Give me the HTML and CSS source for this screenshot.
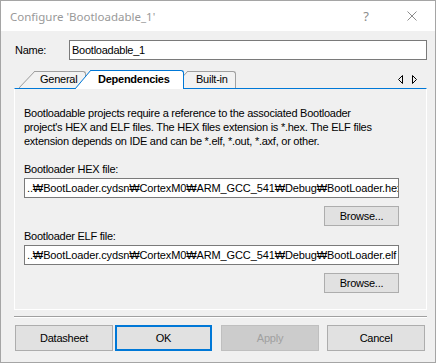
FILE: index.html
```html
<!DOCTYPE html>
<html lang="en">
<head>
    <meta charset="UTF-8">
    <meta name="viewport" content="width=device-width, initial-scale=1.0">
    <title>Configure 'Bootloadable_1'</title>
    <link rel="stylesheet" href="styles.css">
</head>
<body>
    <div class="window">
        <div class="titlebar">
            <span class="title">Configure 'Bootloadable_1'</span>
            <span class="caption-btn help">?</span>
            <span class="caption-btn">
                <svg width="10" height="10" viewBox="0 0 10 10"><path d="M0.5 0.5L9.5 9.5M9.5 0.5L0.5 9.5" stroke="#8c8c8c" stroke-width="1" fill="none"/></svg>
            </span>
        </div>
        <div class="content">
            <div class="name-row">
                <label class="name-label">Name:</label>
                <div class="field">Bootloadable_1</div>
            </div>
            <div class="tabstrip">
                <div class="tab first">General</div>
                <div class="tab active">Dependencies</div>
                <div class="tab last">Built-in</div>
                <div class="tab-scroll">
                    <svg width="20" height="9" viewBox="0 0 20 9">
                        <path d="M4.5 0.5L0.5 4.5L4.5 8.5Z" stroke="#000" fill="none"/>
                        <path d="M14.5 0.5L18.5 4.5L14.5 8.5Z" stroke="#000" fill="none"/>
                    </svg>
                </div>
            </div>
            <div class="panel">
                <p class="info">Bootloadable projects require a reference to the associated Bootloader<br>project's HEX and ELF files. The HEX files extension is *.hex. The ELF files<br>extension depends on IDE and can be *.elf, *.out, *.axf, or other.</p>
                <div class="file-label">Bootloader HEX file:</div>
                <div class="field path">..₩BootLoader.cydsn₩CortexM0₩ARM_GCC_541₩Debug₩BootLoader.hex</div>
                <div class="browse-row"><button class="btn browse">Browse...</button></div>
                <div class="file-label">Bootloader ELF file:</div>
                <div class="field path">..₩BootLoader.cydsn₩CortexM0₩ARM_GCC_541₩Debug₩BootLoader.elf</div>
                <div class="browse-row"><button class="btn browse">Browse...</button></div>
            </div>
            <div class="separator"></div>
            <div class="button-row">
                <button class="btn datasheet">Datasheet</button>
                <button class="btn ok">OK</button>
                <button class="btn apply" disabled>Apply</button>
                <button class="btn cancel">Cancel</button>
            </div>
        </div>
    </div>
</body>
</html>
```

FILE: styles.css
```css
body {
    margin: 0;
    font-family: "Liberation Sans", Arial, sans-serif;
    font-size: 11px;
    letter-spacing: -0.25px;
    color: #000;
    background: #fff;
}
.window {
    width: 436px;
    height: 363px;
    box-sizing: border-box;
    border: 1px solid #a5a5a5;
    background-color: #f0f0f0;
    display: flex;
    flex-direction: column;
}
.titlebar {
    height: 30px;
    background-color: #fff;
    display: flex;
    align-items: center;
    padding-left: 9px;
}
.title {
    flex: 1;
    font-family: "Noto Sans", "DejaVu Sans", sans-serif;
    font-size: 11.5px;
    letter-spacing: 0;
    color: #999;
}
.caption-btn {
    width: 46px;
    height: 30px;
    display: flex;
    align-items: center;
    justify-content: center;
    color: #8c8c8c;
}
.help {
    font-family: "Noto Sans", sans-serif;
    font-size: 13px;
}
.content {
    flex: 1;
    padding: 9px 8px 0 13px;
    display: flex;
    flex-direction: column;
}
.name-row {
    display: flex;
    align-items: center;
    height: 20px;
}
.name-label {
    width: 55px;
    padding-left: 1px;
    box-sizing: border-box;
}
.field {
    flex: 1;
    height: 20px;
    box-sizing: border-box;
    border: 1px solid #7a7a7a;
    background-color: #fff;
    padding: 0 2px;
    line-height: 18px;
    white-space: nowrap;
    overflow: hidden;
}

/* tabs */
.tabstrip {
    margin-top: 10px;
    height: 18px;
    display: flex;
    align-items: flex-end;
}
.tab {
    position: relative;
    height: 17px;
    box-sizing: border-box;
    line-height: 15px;
    border-top: 1px solid #a0a0a0;
    border-right: 1px solid #a0a0a0;
    border-top-right-radius: 3px;
    background-color: #f2f2f2;
    padding-left: 5px;
}
.tab::before {
    content: '';
    position: absolute;
    left: -16px;
    top: -1px;
    bottom: 0;
    width: 16px;
    background: linear-gradient(to bottom right, transparent calc(50% - 0.8px), #a0a0a0 50%, #f2f2f2 calc(50% + 0.8px));
}
.tab.first {
    margin-left: 21px;
    width: 51px;
}
.tab.active {
    z-index: 2;
    height: 19px;
    margin-bottom: -1px;
    margin-left: 5px;
    width: 93px;
    padding-left: 7px;
    padding-top: 1px;
    font-weight: bold;
    background-color: #fff;
    border-color: #0078d7;
}
.tab.active::before {
    background: linear-gradient(to bottom right, transparent calc(50% - 0.8px), #0078d7 50%, #fff calc(50% + 0.8px));
}
.tab.last {
    margin-left: 4px;
    width: 48px;
    padding-left: 8px;
}
.tab-scroll {
    margin-left: auto;
    margin-right: 9px;
    align-self: center;
    height: 9px;
    line-height: 0;
}

/* panel */
.panel {
    height: 222px;
    box-sizing: border-box;
    border: 1px solid #fff;
    border-top-color: #0078d7;
    padding: 17px 27px 0 9px;
}
.info {
    margin: 0;
    line-height: 14px;
}
.file-label {
    margin-top: 14px;
    line-height: 14px;
}
.panel .path {
    margin-top: 2px;
    padding-left: 2px;
    letter-spacing: -0.12px;
}
.browse-row {
    display: flex;
    justify-content: flex-end;
    margin-top: 8px;
}
.browse-row + .file-label {
    margin-top: 3px;
}
.btn {
    font-family: "Liberation Sans", Arial, sans-serif;
    font-size: 11px;
    letter-spacing: -0.25px;
    color: #000;
    height: 26px;
    width: 98px;
    padding: 0;
    border: 1px solid #adadad;
    background-color: #e1e1e1;
    box-sizing: border-box;
}
.btn.browse {
    width: 75px;
    height: 20px;
}
.separator {
    margin-top: 6px;
    border-top: 1px solid #a0a0a0;
    border-bottom: 1px solid #fff;
}
.button-row {
    display: flex;
    margin-top: 7px;
}
.datasheet {
    margin-left: 1px;
}
.ok {
    margin-left: 2px;
    width: 97px;
    border: 2px solid #0078d7;
}
.apply {
    margin-left: 9px;
    background-color: #cccccc;
    border-color: #bfbfbf;
    color: #a0a0a0;
}
.cancel {
    margin-left: 8px;
}
```
